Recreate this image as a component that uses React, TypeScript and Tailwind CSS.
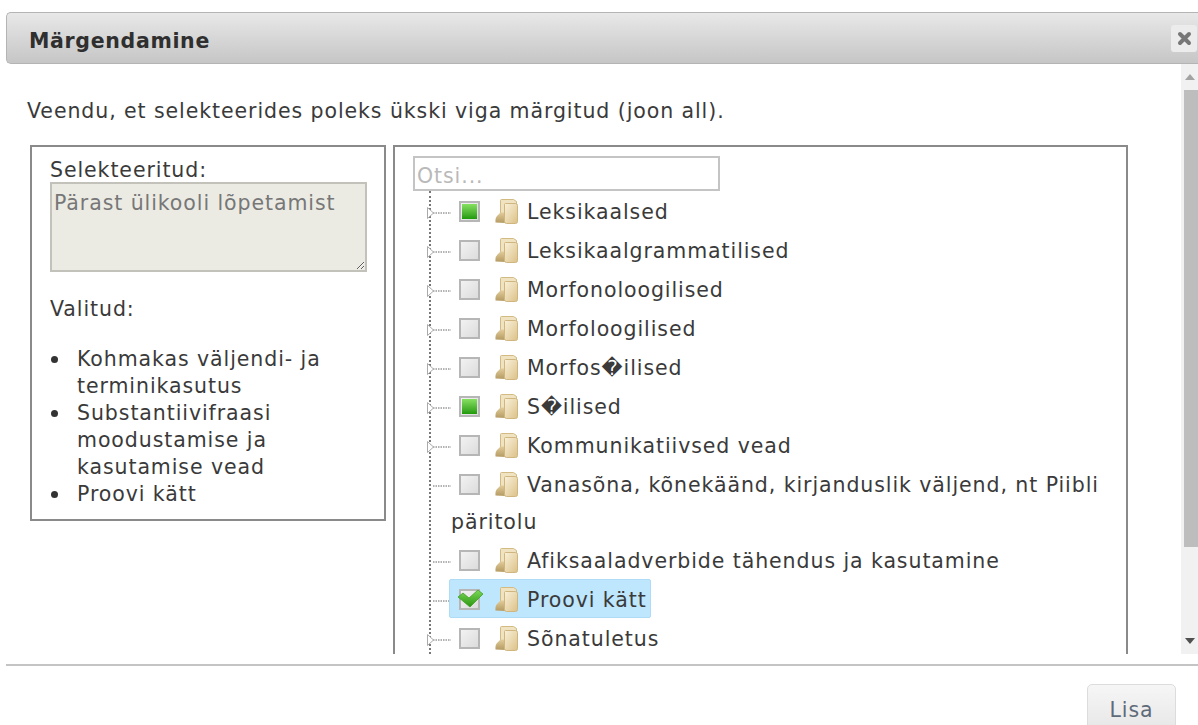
import React from "react";

const REPL = "\uFFFD";

type Node = { label: string; state?: "none" | "partial" | "checked"; open?: boolean; active?: boolean };

const nodes: Node[] = [
  { label: "Leksikaalsed", state: "partial", open: true },
  { label: "Leksikaalgrammatilised", open: true },
  { label: "Morfonoloogilised", open: true },
  { label: "Morfoloogilised", open: true },
  { label: `Morfos${REPL}ilised`, open: true },
  { label: `S${REPL}ilised`, state: "partial", open: true },
  { label: "Kommunikatiivsed vead", open: true },
  { label: "Vanasõna, kõnekäänd, kirjanduslik väljend, nt Piibli päritolu" },
  { label: "Afiksaaladverbide tähendus ja kasutamine" },
  { label: "Proovi kätt", state: "checked", active: true },
  { label: "Sõnatuletus", open: true },
];

const chosen = ["Kohmakas väljendi- ja terminikasutus", "Substantiivifraasi moodustamise ja kasutamise vead", "Proovi kätt"];

function Folder() {
  return (
    <svg width="23" height="25" viewBox="0 0 23 25" className="inline-block align-middle ml-[6px] mr-[9px] -translate-y-[2px]">
      <defs>
        <linearGradient id="sheet" x1="0" y1="0" x2="1" y2="1">
          <stop offset="0" stopColor="#f9f1da" />
          <stop offset="1" stopColor="#dcc188" />
        </linearGradient>
        <linearGradient id="flap" x1="0" y1="0" x2="0" y2="1">
          <stop offset="0" stopColor="#e2cc9a" />
          <stop offset="1" stopColor="#b49a62" />
        </linearGradient>
      </defs>
      <path d="M5.500 1.500q0-1 1-1h12l3 2v16h-16z" fill="#f0e3c2" stroke="#d3b982" strokeWidth="1" />
      <path d="M0.500 23.500q-.5-5 2-7l3-3h5v10.500z" fill="url(#flap)" />
      <path d="M9.500 5.500q0-1 1-1h10q2 0 2 2v16q0 2-2 2h-9q-2 0-2-2z" fill="url(#sheet)" stroke="#d0b67e" strokeWidth="1" />
    </svg>
  );
}

function Check({ state = "none" }: { state?: Node["state"] }) {
  return (
    <span className="relative inline-flex align-middle w-[21px] h-[21px] ml-[8px] mr-[9px] -translate-y-[2px] items-center justify-center border-2 border-[#b6b6b6] bg-gradient-to-br from-[#f2f2f2] to-[#dcdcdc]">
      {state === "partial" && (
        <span className="block w-[15px] h-[15px] bg-gradient-to-b from-[#86e060] to-[#1c9a06]" />
      )}
      {state === "checked" && (
        <svg width="29" height="22" viewBox="0 0 29 22" className="absolute -left-[5px] -top-[4px]">
          <defs>
            <linearGradient id="tick" x1="0" y1="0" x2="0" y2="1">
              <stop offset="0" stopColor="#7cd858" />
              <stop offset="1" stopColor="#2a9610" />
            </linearGradient>
          </defs>
          <path d="M2 10l5-4 6 5 9-8 5 4-13 13z" fill="url(#tick)" stroke="#3c9e22" strokeWidth="0.75" strokeLinejoin="round" />
        </svg>
      )}
    </span>
  );
}

function Connector({ open }: { open?: boolean }) {
  return (
    <span className="shrink-0 flex items-center w-[24px] -ml-[4px] h-[37px]">
      <svg width="24" height="14" viewBox="0 0 24 14">
        <line x1="6" y1="7" x2="24" y2="7" stroke="#666" strokeWidth="1" strokeDasharray="1.500 1" />
        {open && <path d="M0.500 1.500v11l6-5.500z" fill="#fff" stroke="#aaaaaa" strokeWidth="1" />}
      </svg>
    </span>
  );
}

function TreeRow({ node }: { node: Node }) {
  return (
    <li className="flex mb-[2px] leading-[37px]">
      <Connector open={node.open} />
      <div className="flex-1 min-w-0">
        <span
          className={
            node.active
              ? "inline-block -mt-[3px] -mb-px pt-[3px] leading-[34px] pl-px pr-[3px] rounded-[2px] bg-[#bee6fd] border border-[#aedcf7] -ml-[2px]"
              : ""
          }
        >
          <Check state={node.state} />
          <Folder />
          <span>{node.label}</span>
        </span>
      </div>
    </li>
  );
}

export default function App() {
  return (
    <div
      className="w-[1198px] h-[725px] overflow-hidden bg-white text-[#3a3a3a] text-[20.5px] tracking-[0.92px]"
      style={{ fontFamily: '"DejaVu Sans", Verdana, sans-serif' }}
    >
      <div className="pt-[12px] pl-[6px]">
        <header className="flex items-center justify-between h-[52px] pl-[22px] pr-px border border-r-0 border-[#b4b4b4] rounded-l-[5px] bg-gradient-to-b from-[#e8e8e8] to-[#c6c6c6]">
          <h1 className="pt-[6px] text-[20.5px] tracking-[0.67px] font-bold text-[#2f2f2f]">Märgendamine</h1>
          <button className="w-[26px] h-[27px] flex items-center justify-center rounded-[3px] bg-[#ececec]">
            <svg width="15" height="15" viewBox="0 0 15 15">
              <path d="M3 3l9 9M12 3l-9 9" stroke="#777" strokeWidth="4" strokeLinecap="round" />
            </svg>
          </button>
        </header>
      </div>

      <div className="flex h-[590px] pl-[6px]">
        <main className="flex-1 min-w-0 overflow-hidden pl-[21px] pt-[33px]">
          <p className="leading-[28px]">Veendu, et selekteerides poleks ükski viga märgitud (joon all).</p>
          <div className="flex items-start gap-[7px] mt-[20px] pl-[3px]">
            <section className="w-[356px] h-[376px] shrink-0 border-2 border-[#8a8a8a] pl-[18px] pr-[17px] pt-[11px]">
              <div className="leading-[24px]">Selekteeritud:</div>
              <textarea
                readOnly
                value="Pärast ülikooli lõpetamist"
                className="block w-[317px] h-[90px] border-2 border-[#c2c2ba] bg-[#ebebe4] text-[#777] px-[2px] pt-[6px] leading-[26px]"
              />
              <div className="mt-[24px] leading-[27px]">Valitud:</div>
              <ul className="mt-[23px] leading-[27px]">
                {chosen.map((item) => (
                  <li key={item} className="flex">
                    <span className="shrink-0 w-[27px] h-[27px] flex items-center">
                      <span className="block w-[7px] h-[7px] ml-[1px] rounded-full bg-[#333]" />
                    </span>
                    <span className="flex-1">{item}</span>
                  </li>
                ))}
              </ul>
            </section>

            <section className="w-[735px] shrink-0 border-2 border-b-0 border-[#8a8a8a] pl-[18px] pt-[9px] h-[520px] overflow-hidden">
              <input
                placeholder="Otsi..."
                className="block w-[307px] h-[35px] border-2 border-[#c4c4c4] px-[2px] pt-[5px] outline-none placeholder:text-[#b9b9b9]"
              />
              <ul className="ml-[16px] mr-[20px] border-l-2 border-dotted border-[#777] pt-[3px]">
                {nodes.map((n) => (
                  <TreeRow key={n.label} node={n} />
                ))}
              </ul>
            </section>
          </div>
        </main>

        {/* vertical scrollbar of the dialog body */}
        <aside className="w-[17px] shrink-0 flex flex-col bg-[#f1f1f1] items-end">
          <div className="h-[26px] w-full flex items-center justify-center">
            <svg width="10" height="6" viewBox="0 0 10 6"><path d="M5 0l5 6H0z" fill="#a3a3a3" /></svg>
          </div>
          <div className="w-[14px] h-[457px] bg-[#bdbdbd]" />
          <div className="flex-1" />
          <div className="h-[26px] w-full flex items-center justify-center">
            <svg width="10" height="6" viewBox="0 0 10 6"><path d="M0 0h10L5 6z" fill="#505050" /></svg>
          </div>
        </aside>
      </div>

      <footer className="ml-[6px] mt-[10px] border-t-2 border-[#c4c4c4] flex justify-end pr-[22px] pt-[18px]">
        <button className="w-[89px] h-[50px] pt-[2px] rounded-[5px] border border-[#dcdcdc] bg-gradient-to-b from-[#f6f6f6] to-[#e6e6e6] text-[#5f6b78]">
          Lisa
        </button>
      </footer>
    </div>
  );
}
